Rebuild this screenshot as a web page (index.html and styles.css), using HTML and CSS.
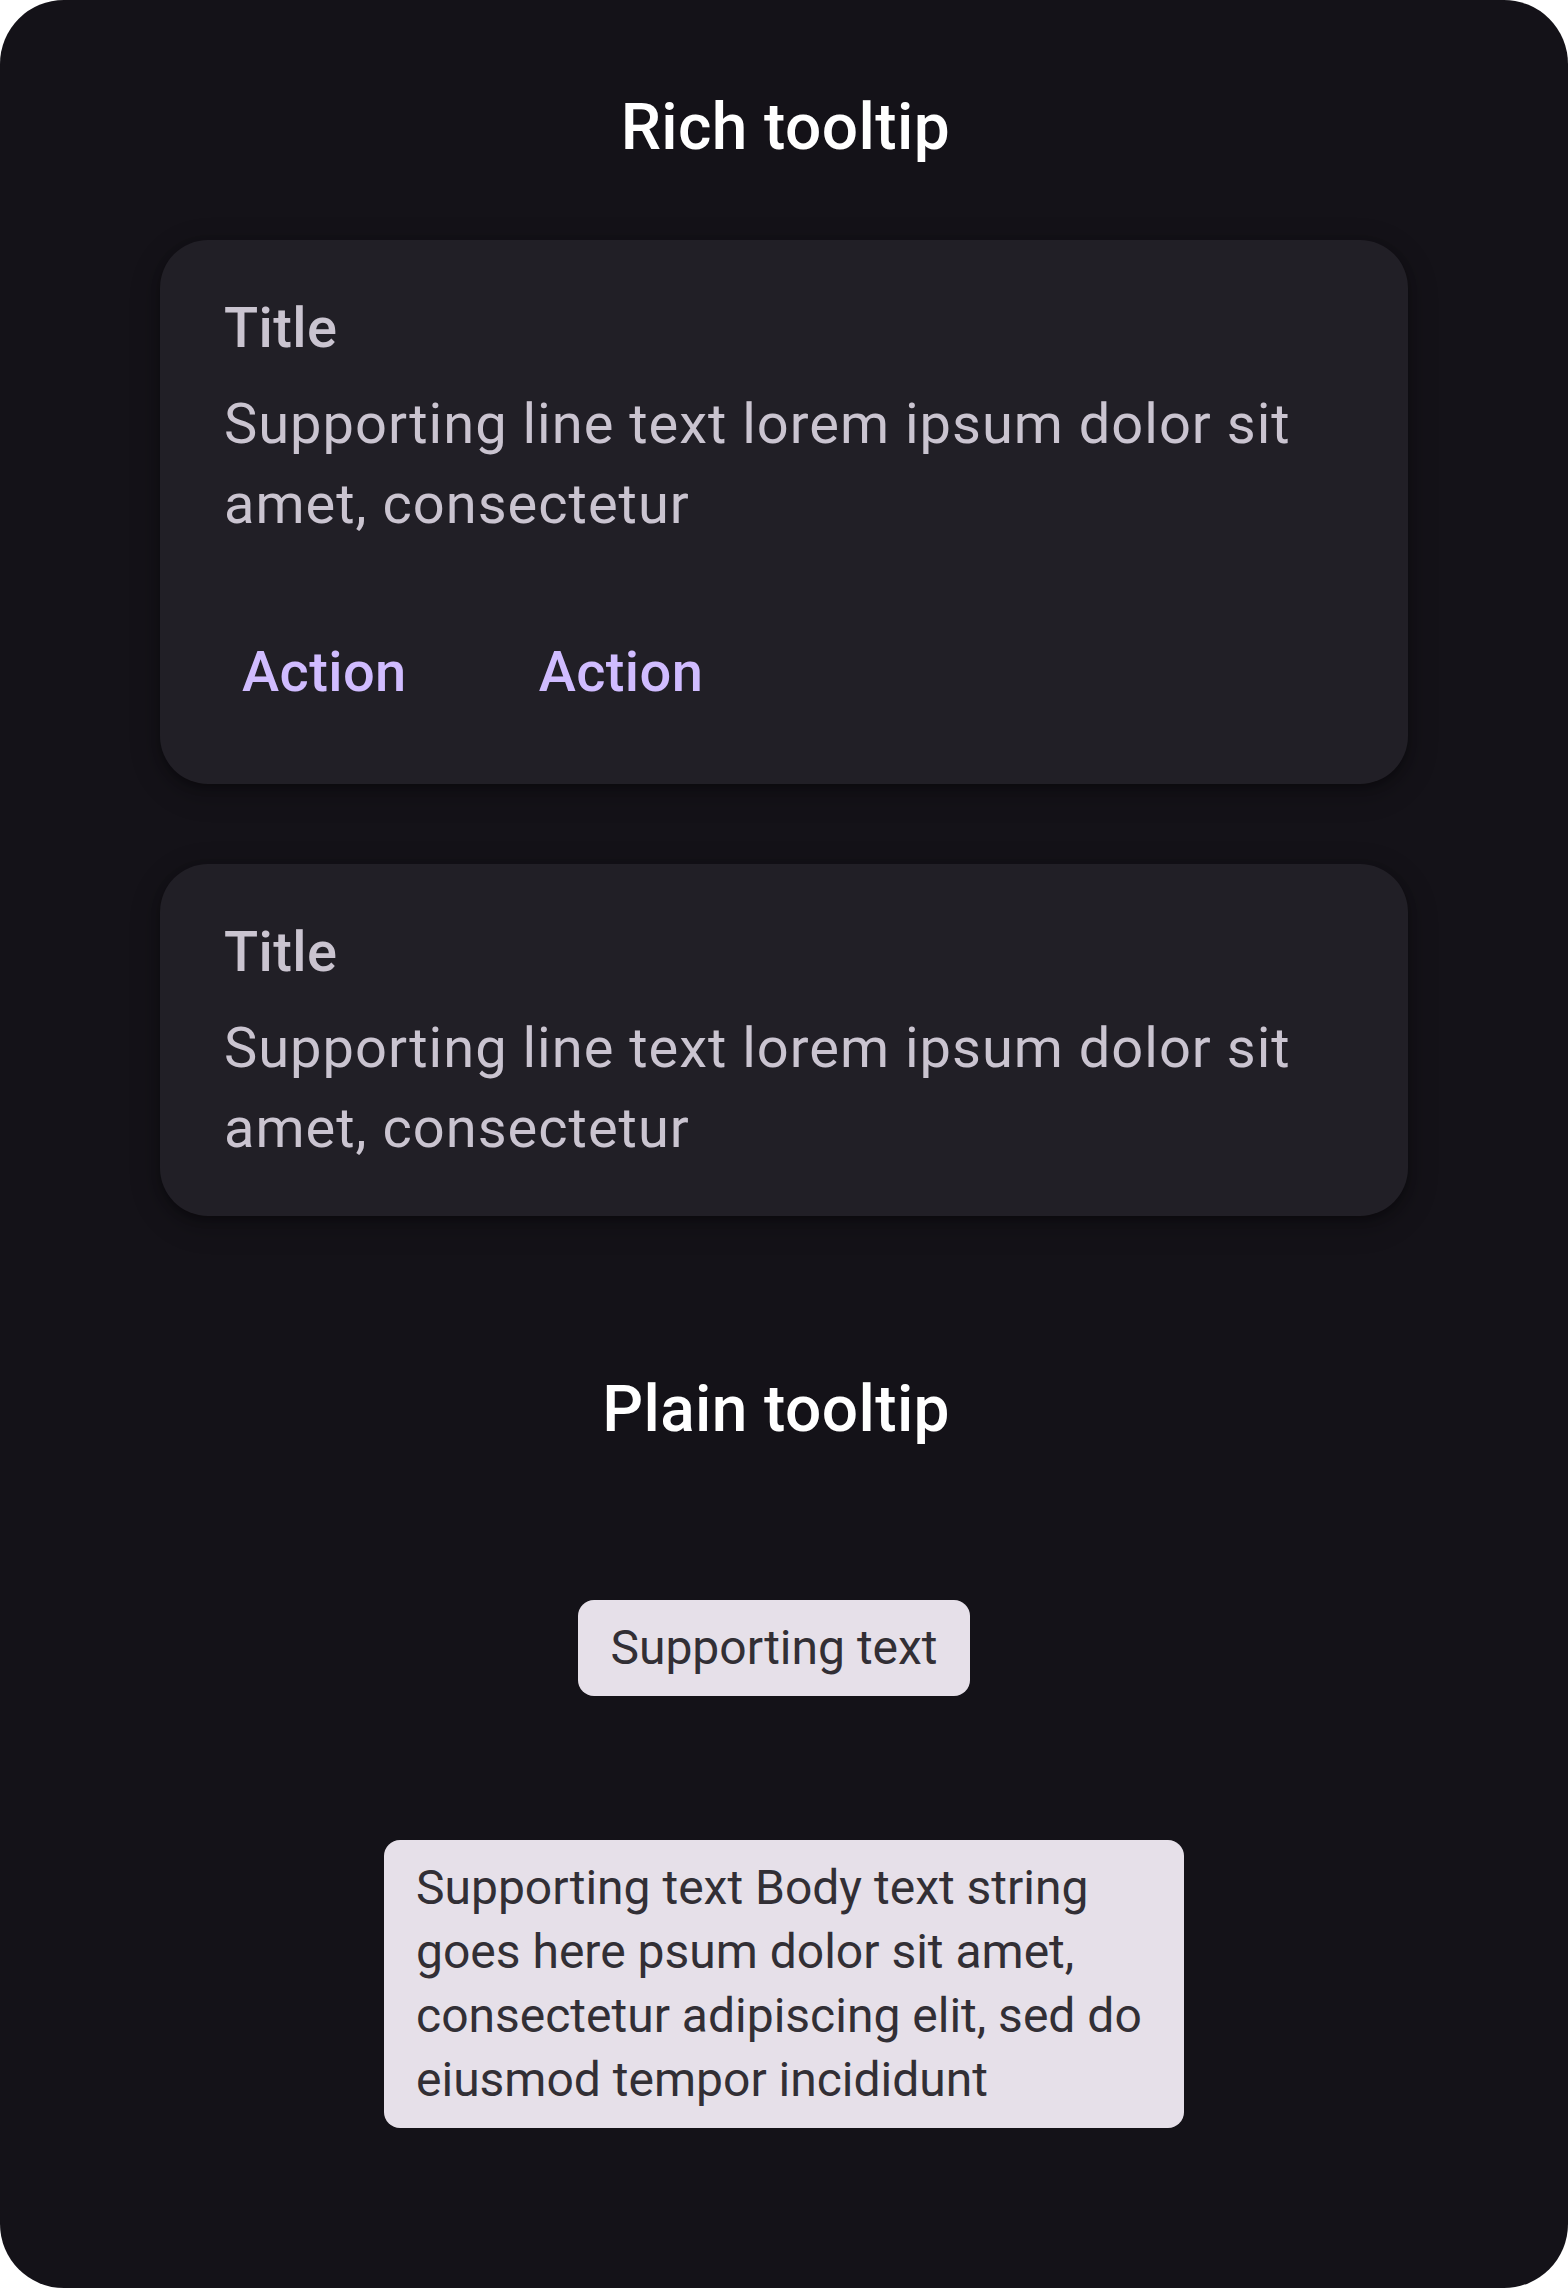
FILE: index.html
```html
<!DOCTYPE html>
<html lang="en">
<head>
<meta charset="utf-8">
<title>Tooltips</title>
<link rel="stylesheet" href="styles.css">
</head>
<body>
<main class="frame">
  <h2 class="section-title rich-title">Rich tooltip</h2>
  <div class="rich-list">
    <div class="rich-tooltip">
      <div class="rt-title">Title</div>
      <p class="rt-text">Supporting line text lorem ipsum dolor sit amet, consectetur</p>
      <div class="rt-actions">
        <button class="rt-action">Action</button>
        <button class="rt-action">Action</button>
      </div>
    </div>
    <div class="rich-tooltip no-actions">
      <div class="rt-title">Title</div>
      <p class="rt-text">Supporting line text lorem ipsum dolor sit amet, consectetur</p>
    </div>
  </div>
  <h2 class="section-title plain-title">Plain tooltip</h2>
  <div class="plain-list">
    <div class="plain-tooltip short">Supporting text</div>
    <div class="plain-tooltip long">Supporting text Body text string goes here psum dolor sit amet, consectetur adipiscing elit, sed do eiusmod tempor incididunt</div>
  </div>
</main>
</body>
</html>
```
FILE: styles.css
```css
html, body {
  margin: 0;
  padding: 0;
  background: #ffffff;
}

body {
  font-family: Roboto, "Liberation Sans", Arial, sans-serif;
}

.frame {
  box-sizing: border-box;
  width: 1568px;
  height: 2288px;
  background: #141218;
  border-radius: 64px;
  padding-top: 80px;
  display: flex;
  flex-direction: column;
  align-items: center;
}

.section-title {
  margin: 0;
  align-self: stretch;
  text-align: right;
  padding-right: 618px;
  font-size: 64px;
  line-height: 96px;
  font-weight: 500;
  letter-spacing: 0.4px;
  color: #ffffff;
}

.rich-list {
  margin-top: 64px;
  display: flex;
  flex-direction: column;
  gap: 80px;
}

.rich-tooltip {
  box-sizing: border-box;
  width: 1248px;
  background: #211f26;
  border-radius: 48px;
  padding: 48px 64px 32px;
  box-shadow: 0 4px 8px rgba(0, 0, 0, 0.3), 0 8px 24px 8px rgba(0, 0, 0, 0.15);
  color: #cac4d0;
}

.rich-tooltip.no-actions {
  padding-bottom: 48px;
}

.rt-title {
  font-size: 56px;
  line-height: 80px;
  font-weight: 500;
  letter-spacing: 0.4px;
}

.rt-text {
  margin: 16px 0 0;
  font-size: 56px;
  line-height: 80px;
  font-weight: 400;
  letter-spacing: 1px;
}

.rt-actions {
  margin: 48px 0 0 -30px;
  display: flex;
  gap: 36px;
}

.rt-action {
  height: 160px;
  padding: 0 48px;
  border: 0;
  border-radius: 80px;
  background: transparent;
  color: #d0bcff;
  font-family: inherit;
  font-size: 56px;
  line-height: 80px;
  font-weight: 500;
  letter-spacing: 0.4px;
}

.plain-title {
  margin-top: 146px;
}

.plain-list {
  margin-top: 142px;
  display: flex;
  flex-direction: column;
  align-items: center;
  gap: 144px;
}

.plain-tooltip {
  box-sizing: border-box;
  background: #e6e0e9;
  color: #322f35;
  border-radius: 16px;
  padding: 16px 32px;
  font-size: 48px;
  line-height: 64px;
  font-weight: 400;
  letter-spacing: 0;
}

.plain-tooltip.short {
  margin-right: 20px;
}

.plain-tooltip.long {
  width: 800px;
}
```
